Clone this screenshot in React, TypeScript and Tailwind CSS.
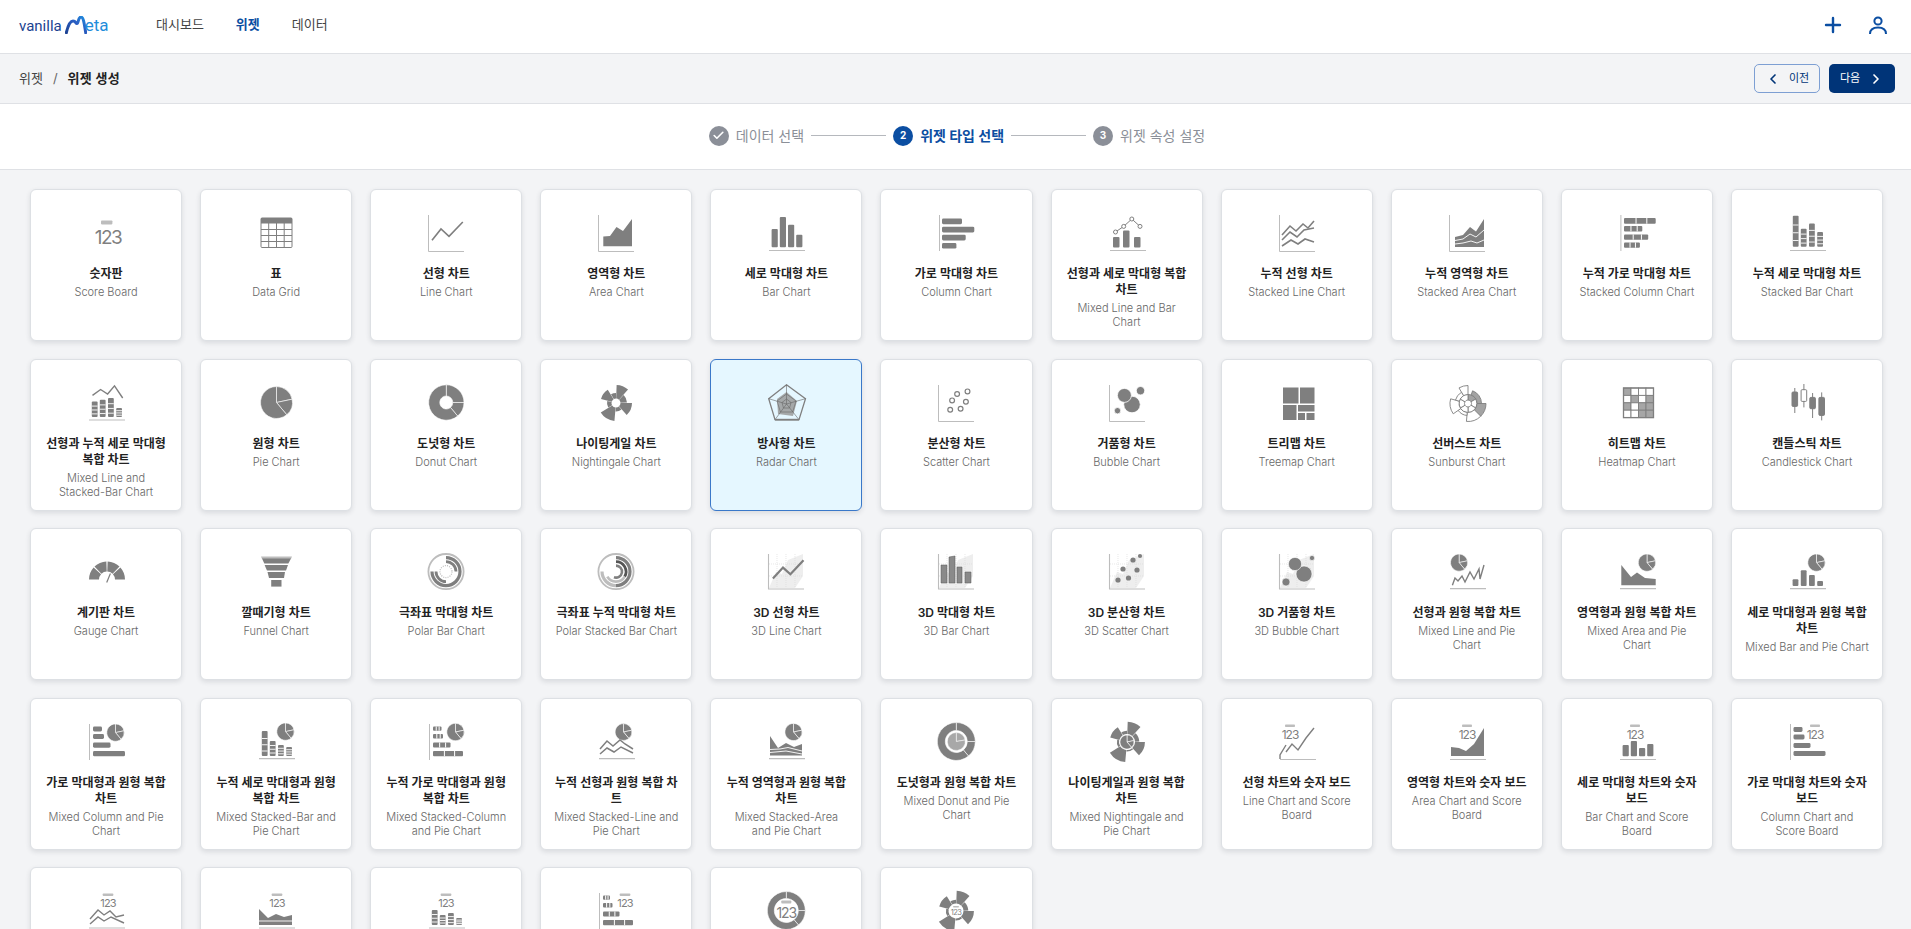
import { Check, ChevronLeft, ChevronRight, Plus } from 'lucide-react'
import type { ReactNode } from 'react'

const G = '#7f7f7f'
const L = '#bdbdbd'

const pt = (cx: number, cy: number, r: number, a: number) => {
  const t = (a * Math.PI) / 180
  return `${(cx + r * Math.sin(t)).toFixed(2)} ${(cy - r * Math.cos(t)).toFixed(2)}`
}

// a ring slice, angles clockwise from 12 o'clock
const sector = (cx: number, cy: number, r0: number, r1: number, a0: number, a1: number) => {
  const big = a1 - a0 > 180 ? 1 : 0
  return `M${pt(cx, cy, r1, a0)}A${r1} ${r1} 0 ${big} 1 ${pt(cx, cy, r1, a1)}L${pt(cx, cy, r0, a1)}A${r0} ${r0} 0 ${big} 0 ${pt(cx, cy, r0, a0)}Z`
}

const arc = (cx: number, cy: number, r: number, a0: number, a1: number) => {
  const big = a1 - a0 > 180 ? 1 : 0
  return `M${pt(cx, cy, r, a0)}A${r} ${r} 0 ${big} 1 ${pt(cx, cy, r, a1)}`
}

const Axis = () => <path d="M2.5 2V38.5H38" fill="none" stroke={L} strokeWidth="1" />
const Base = ({ y = 37.5 }: { y?: number }) => <path d={`M3 ${y}H39`} stroke={L} strokeWidth="1.2" />
const LeftAxis = () => <path d="M3.5 2V38" stroke={L} strokeWidth="1" />

const Pie = ({ cx = 20, cy = 19.5, r = 16 }: { cx?: number; cy?: number; r?: number }) => (
  <g fill={G} stroke="#fff" strokeWidth="0.6">
    <path d={sector(cx, cy, 0, r, 0, 78)} />
    <path d={sector(cx, cy, 0, r, 78, 140)} />
    <path d={sector(cx, cy, 0, r, 140, 360)} />
  </g>
)

const Score = ({ x = 15, y = 7.4, w = 11, fs = 19, dx = 0, fill = L }: { x?: number; y?: number; w?: number; fs?: number; dx?: number; fill?: string }) => (
  <g>
    <rect x={x - w / 2 - dx} y={y} width={w} height={fs * 0.21} rx="0.8" fill={fill} />
    <text x={x} y={y + fs * 1.24} textAnchor="middle" fontSize={fs} fontWeight="400" letterSpacing={-fs * 0.08} fill={G}>
      123
    </text>
  </g>
)

const Night = ({ cx = 20, cy = 20, k = 1, r0 = 4.5 }: { cx?: number; cy?: number; k?: number; r0?: number }) => {
  const petals = [
    [2, 42, 18],
    [44, 88, 11],
    [90, 138, 16],
    [140, 183, 8.5],
    [185, 238, 18],
    [240, 283, 9],
    [285, 328, 15.5],
    [330, 360, 10],
  ]
  return (
    <g fill={G}>
      {petals.map(([a, b, r]) => (
        <path key={a} d={sector(cx, cy, r0, r * k, a, b)} />
      ))}
    </g>
  )
}

const Donut = ({ r0 = 6.5, r1 = 17.7 }: { r0?: number; r1?: number }) => (
  <g fill={G} stroke="#fff" strokeWidth="0.6">
    <path d={sector(20.3, 19.5, r0, r1, 0, 90)} />
    <path d={sector(20.3, 19.5, r0, r1, 90, 140)} />
    <path d={sector(20.3, 19.5, r0, r1, 140, 360)} />
  </g>
)

const BarsPlain = ({ tops }: { tops: number[] }) => (
  <g fill={G}>
    {[5.6, 13.8, 22, 30.2].map((x, i) => (
      <rect key={x} x={x} y={tops[i]} width="6.2" height={34.2 - tops[i]} rx="1" />
    ))}
  </g>
)

const BarsStacked = ({ tops, bottom = 33.7, w = 5.8 }: { tops: number[]; bottom?: number; w?: number }) => (
  <g>
    {[5.8, 13.8, 22, 30.2].map((x, i) => (
      <g key={x}>
        <rect x={x} y={tops[i]} width={w} height={bottom - tops[i]} rx="1" fill={G} />
        {[0.3, 0.55, 0.8].map((f) => (
          <path key={f} d={`M${x} ${tops[i] + (bottom - tops[i]) * f}h${w}`} stroke="#fff" strokeWidth="0.9" />
        ))}
      </g>
    ))}
  </g>
)

const Rows = ({ rows }: { rows: [number, number, number, number][] }) => (
  <g fill={G}>
    {rows.map(([x, y, w, h]) => (
      <rect key={y} x={x} y={y} width={w} height={h} rx="1.4" />
    ))}
  </g>
)

const StackRows = ({ rows }: { rows: [number, number, number][] }) => (
  <g>
    {rows.map(([y, w, h]) => (
      <g key={y}>
        <rect x="7" y={y} width={w} height={h} rx="1" fill={G} />
        {[0.38, 0.72].map((f) => (
          <path key={f} d={`M${7 + w * f} ${y}v${h}`} stroke="#fff" strokeWidth="1" />
        ))}
      </g>
    ))}
  </g>
)

const Zigzags = ({ y = 0 }: { y?: number }) => (
  <g fill="none" stroke={G} strokeWidth="1.6" transform={`translate(0 ${y})`}>
    <path d="M5 20L13 11L19 16L26 9L31 13L37 6" />
    <path d="M5 25L13 17L20 22L27 15L37 13" />
    <path d="M5 31L14 25L21 29L28 24L37 27" />
  </g>
)

const Grid3D = () => (
  <g>
    <path d="M3 36L10 20L16 22L22 8L37 2V24L29 36Z" fill="#eeeeee" />
    <path d="M11 2V36M20 2V36M29 2V36M3 12H37M3 24H37" stroke="#d8d8d8" strokeWidth="0.6" strokeDasharray="1 1" />
    <path d="M2.5 2V37H38" fill="none" stroke={L} strokeWidth="1.1" />
  </g>
)

const icons: ReactNode[][] = [
  [
    <Score x={22} y={7.4} w={11.4} fs={19} dx={1.3} />,
    <g>
      <rect x="5" y="5" width="31" height="29.5" rx="1" fill="none" stroke={G} strokeWidth="1" />
      <rect x="5" y="5" width="31" height="5.5" fill={G} />
      <path d="M5 16.5H36M5 22.5H36M5 28.5H36M12.7 10V34M20.5 10V34M28.2 10V34" stroke={G} strokeWidth="1" />
    </g>,
    <g>
      <Axis />
      <path d="M6 27.3L15 16L23 23.4L36.8 9" fill="none" stroke={G} strokeWidth="1.6" />
    </g>,
    <g>
      <Axis />
      <path d="M7.3 33.3V23.4L14 23L20.5 14L27 18L36 6V33.3Z" fill={G} />
    </g>,
    <g>
      <BarsPlain tops={[16, 4, 11.7, 21.7]} />
      <Base />
    </g>,
    <g>
      <LeftAxis />
      <Rows rows={[[6, 5.4, 20, 5.8], [6, 13.7, 32.3, 5.8], [6, 21.7, 23.7, 5.8], [6, 30, 14.4, 5.6]]} />
    </g>,
    <g>
      <g fill={G}>
        <rect x="6" y="24" width="6.5" height="10.5" rx="1" />
        <rect x="16" y="17.5" width="6.5" height="17" rx="1" />
        <rect x="27" y="24" width="6.5" height="10.5" rx="1" />
      </g>
      <path d="M8.5 19L16.7 13.4L24.8 6L33 13.4" fill="none" stroke={G} strokeWidth="1" />
      <g fill="#fff" stroke={G} strokeWidth="1">
        <circle cx="8.5" cy="19" r="2" />
        <circle cx="16.7" cy="13.4" r="2" />
        <circle cx="24.8" cy="6" r="2" />
        <circle cx="33" cy="13.4" r="2" />
      </g>
      <Base />
    </g>,
    <g>
      <Axis />
      <Zigzags y={2} />
    </g>,
    <g>
      <Axis />
      <path d="M8 24L16 22L23 14L29 18.4L37 6V34H8Z" fill={G} />
      <path d="M8 27.5L16 26L23 21L29 24L37 17M8 31L16 30L24 28L30 30L37 27" fill="none" stroke="#fff" strokeWidth="0.9" />
    </g>,
    <g>
      <path d="M3.9 2V38" stroke={L} strokeWidth="1" />
      <StackRows rows={[[5, 31.7, 5.7], [13, 18.3, 5.4], [21.4, 24.2, 5.3], [29.4, 15.9, 5.3]]} />
    </g>,
    <g>
      <BarsStacked tops={[2.7, 15.7, 10.4, 19]} />
      <Base />
    </g>,
  ],
  [
    <g>
      <BarsStacked tops={[18.4, 16.7, 15, 25]} bottom={34} />
      <path d="M6.5 12.4L14.6 6.5L21.6 11L28.5 2.8L36.7 15" fill="none" stroke={G} strokeWidth="1.4" />
      <Base y={37} />
    </g>,
    <Pie cx={20.5} cy={19.5} r={16} />,
    <Donut />,
    <Night />,
    <g>
      <path d="M20.5 1.7L39.5 15.7L33 36.7H9L2.7 15.7Z" fill="none" stroke={G} strokeWidth="1.3" />
      <path d="M20.5 9L31 18L27 33L12 31L11 16Z" fill="#9a9a9a" fillOpacity="0.85" />
      <path d="M20.5 21V1.7M20.5 21L39.5 15.7M20.5 21L33 36.7M20.5 21L9 36.7M20.5 21L2.7 15.7" stroke="#666" strokeWidth="0.6" />
      <path d="M20.5 11L30 18L26.7 29H14.5L11 18Z" fill="none" stroke="#666" strokeWidth="0.6" />
      <path d="M20.5 16L25 19.5L23.5 25H17.5L16 19.5Z" fill="none" stroke="#666" strokeWidth="0.6" />
      <path d="M9 36.7H33" stroke={G} strokeWidth="1.8" />
    </g>,
    <g>
      <Axis />
      <g fill="none" stroke={G} strokeWidth="1.2">
        <circle cx="31.5" cy="8.4" r="2.4" />
        <circle cx="21.1" cy="11" r="2.4" />
        <circle cx="16.1" cy="17.4" r="2.4" />
        <circle cx="29.9" cy="18.7" r="2.4" />
        <circle cx="14.2" cy="26.7" r="2.4" />
        <circle cx="24.6" cy="25.7" r="2.4" />
      </g>
    </g>,
    <g>
      <Axis />
      <g fill={G} stroke="#fff" strokeWidth="0.8">
        <circle cx="25" cy="21.5" r="8.3" />
        <circle cx="17.4" cy="12.4" r="7" />
        <circle cx="33.5" cy="7.7" r="4.2" />
        <circle cx="10.5" cy="27.7" r="3.2" />
      </g>
    </g>,
    <g fill={G}>
      <rect x="6" y="4.5" width="15.5" height="16" />
      <rect x="23" y="4.5" width="14.5" height="16" />
      <rect x="6" y="22" width="13.5" height="15" />
      <rect x="21" y="22" width="16.5" height="6.5" />
      <rect x="21" y="30" width="7" height="7" />
      <rect x="29.5" y="30" width="8" height="7" />
    </g>,
    <g stroke={G} strokeWidth="0.9" fill="#fff">
      <path d={sector(21, 20.5, 3.5, 9, 0, 60)} fill="#a3a3a3" />
      <path d={sector(21, 20.5, 3.5, 9, 60, 120)} />
      <path d={sector(21, 20.5, 3.5, 9, 120, 180)} />
      <path d={sector(21, 20.5, 3.5, 9, 180, 240)} />
      <path d={sector(21, 20.5, 3.5, 9, 240, 300)} />
      <path d={sector(21, 20.5, 3.5, 9, 300, 360)} />
      <path d={sector(21, 20.5, 9, 18, 330, 360)} />
      <path d={sector(21, 20.5, 9, 13.5, 20, 90)} fill="#a3a3a3" />
      <path d={sector(21, 20.5, 9, 18, 90, 135)} fill="#a3a3a3" />
      <path d={sector(21, 20.5, 9, 18, 135, 185)} />
      <path d={sector(21, 20.5, 9, 12, 185, 235)} />
      <path d={sector(21, 20.5, 9, 18, 235, 285)} />
      <path d={sector(21, 20.5, 9, 13, 285, 330)} />
    </g>,
    <g>
      {[0, 1, 2, 3].map((r) =>
        [0, 1, 2, 3].map((c) => {
          const on = (r === 0 && c === 0) || (r === 1 && (c === 1 || c === 3)) || (r === 2 && (c === 0 || c === 2 || c === 3)) || (r === 3 && (c === 2 || c === 3))
          return <rect key={`${r}-${c}`} x={6.5 + c * 7.5} y={5 + r * 7.4} width="7.5" height="7.4" fill={on ? '#a6a6a6' : '#fff'} stroke={G} strokeWidth="0.9" />
        }),
      )}
      <rect x="6.5" y="5" width="30" height="29.6" fill="none" stroke={G} strokeWidth="1.3" />
    </g>,
    <g stroke={G} strokeWidth="1">
      <path d="M7.8 5V30M16.9 1V24.4M25.6 10V35M34.7 9.4V37.4" />
      <rect x="5" y="9" width="5.6" height="14.4" rx="1" fill={G} />
      <rect x="14.1" y="6.7" width="5.6" height="11.7" rx="1" fill="#fff" />
      <rect x="22.8" y="14.4" width="5.6" height="11.3" rx="1" fill={G} />
      <rect x="31.9" y="14.4" width="5.6" height="18" rx="1" fill={G} />
    </g>,
  ],
  [
    <g>
      <g fill={G}>
        <path d={sector(21, 27.5, 8, 18, 270, 312)} />
        <path d={sector(21, 27.5, 8, 18, 316, 358)} />
        <path d={sector(21, 27.5, 8, 18, 2, 44)} />
        <path d={sector(21, 27.5, 8, 18, 48, 90)} />
      </g>
      <path d="M24.4 21.6L20.7 30.6" stroke="#fff" strokeWidth="2.6" />
      <path d="M24.4 21.6L20.7 30.6" stroke={G} strokeWidth="1.2" />
    </g>,
    <g>
      <path d="M5 4.6H36L35 7H6Z" fill={L} />
      <path d="M6 6.5H35L32.4 11.5H8.3Z" fill={G} />
      <path d="M8.6 13H32L30 18.5H11Z" fill={G} />
      <path d="M11.5 20H29L28 26H13Z" fill={G} />
      <path d="M15.2 28H25.5V34.6H15.2Z" fill={G} />
    </g>,
    <g fill="none">
      <circle cx="20" cy="19.6" r="17.6" stroke={L} strokeWidth="1.8" />
      <path d={arc(20, 19.6, 14, 0, 270)} stroke={G} strokeWidth="3.2" />
      <path d={arc(20, 19.6, 10, 0, 90)} stroke={G} strokeWidth="2.8" />
      <path d={arc(20, 19.6, 10, 180, 270)} stroke={G} strokeWidth="2.8" />
      <circle cx="20" cy="19.6" r="6" stroke={L} strokeWidth="1.2" strokeDasharray="1 1.2" />
    </g>,
    <g fill="none">
      <circle cx="20" cy="19.6" r="17.6" stroke={L} strokeWidth="1.8" />
      <path d={arc(20, 19.6, 14, 0, 180)} stroke={G} strokeWidth="3.2" />
      <path d={arc(20, 19.6, 14, 180, 270)} stroke={L} strokeWidth="3.2" />
      <path d={arc(20, 19.6, 10, 0, 120)} stroke="#555" strokeWidth="2.8" />
      <path d={arc(20, 19.6, 10, 120, 240)} stroke={L} strokeWidth="2.8" />
      <path d={arc(20, 19.6, 6, 0, 200)} stroke={G} strokeWidth="2.6" />
    </g>,
    <g>
      <Grid3D />
      <path d="M6.9 26.6L17 15.6L24.4 22.3L37.5 8.3" fill="none" stroke={G} strokeWidth="2.2" />
    </g>,
    <g>
      <Grid3D />
      <g fill="#8a8a8a" stroke="#555" strokeWidth="0.5">
        <path d="M5 13H11V31H5Z" />
        <path d="M13 5L19 4V31H13Z" />
        <path d="M21 15H26V31H21Z" />
        <path d="M29 20H35V31H29Z" />
      </g>
    </g>,
    <g>
      <Grid3D />
      <g fill={G}>
        <circle cx="26" cy="8" r="2.6" />
        <circle cx="33" cy="4" r="2.1" />
        <circle cx="16" cy="17" r="2.6" />
        <circle cx="30" cy="18" r="2.6" />
        <circle cx="11" cy="28" r="2.6" />
        <circle cx="21.5" cy="26" r="2.6" />
      </g>
    </g>,
    <g>
      <Grid3D />
      <g fill={G} stroke="#fff" strokeWidth="0.6">
        <circle cx="27" cy="22" r="8" />
        <circle cx="18" cy="12" r="6.6" />
        <circle cx="35" cy="6" r="2.6" />
        <circle cx="9" cy="30" r="4" />
      </g>
    </g>,
    <g>
      <Pie cx={12.1} cy={10.6} r={8.6} />
      <path d="M5.4 33.3L8 26L11 29L15 24L18 30L23 20L27 27L32 17L33 27L37 13" fill="none" stroke={G} strokeWidth="1.4" />
      <Base y={36.6} />
    </g>,
    <g>
      <path d="M4.3 13L14 25L20 20.5L28 26L38.7 27V33.3H4.3Z" fill={G} />
      <Pie cx={30} cy={10.6} r={8.7} />
      <Base y={36.6} />
    </g>,
    <g>
      <g fill={G}>
        <rect x="5.6" y="27.3" width="5.8" height="6.8" rx="1" />
        <rect x="13.8" y="18.3" width="5.8" height="15.8" rx="1" />
        <rect x="22" y="23" width="5.8" height="11" rx="1" />
        <rect x="30.2" y="29" width="5.8" height="5" rx="1" />
      </g>
      <Pie cx={29.5} cy={10.6} r={8.7} />
      <Base y={36.6} />
    </g>,
  ],
  [
    <g>
      <LeftAxis />
      <Rows rows={[[7, 4.5, 9, 5], [7, 12, 11, 5], [7, 20.5, 17.5, 5.2], [7, 29, 32, 5.3]]} />
      <Pie cx={29.5} cy={10.6} r={8.7} />
    </g>,
    <g>
      <BarsStacked tops={[9, 19, 23, 25]} bottom={34} />
      <Pie cx={29.5} cy={9.6} r={8.7} />
      <Base y={36.6} />
    </g>,
    <g>
      <LeftAxis />
      <StackRows rows={[[4.5, 8.5, 4.2], [12, 10, 4.6], [20.5, 17.5, 5], [29, 30, 5.2]]} />
      <Pie cx={29.5} cy={10} r={8.7} />
    </g>,
    <g>
      <Pie cx={27.5} cy={10} r={8.4} />
      <path d="M4 27L11 19L17 24L24 18L29 22L37 27" fill="none" stroke={G} strokeWidth="1.5" />
      <path d="M4 32L11 26L18 30L25 25L37 31" fill="none" stroke={G} strokeWidth="1.5" />
      <Base y={36.6} />
    </g>,
    <g>
      <path d="M4 14L12 26L20 21L28 25L36 22V33.5H4Z" fill={G} />
      <path d="M4 27.5L14 27L22 25.5L36 29M4 30.5L20 29L36 32" fill="none" stroke="#fff" strokeWidth="0.9" />
      <Pie cx={27.5} cy={10} r={8.6} />
      <Base y={36.6} />
    </g>,
    <g>
      <Donut r0={11} r1={19} />
      <path d={sector(20.3, 19.5, 0, 9, 0, 80)} fill="#a8a8a8" stroke="#fff" strokeWidth="0.5" />
      <path d={sector(20.3, 19.5, 0, 9, 80, 360)} fill="#a8a8a8" stroke="#fff" strokeWidth="0.5" />
    </g>,
    <g>
      <Night k={1.12} r0={8} />
      <Pie cx={20} cy={20} r={7} />
    </g>,
    <g>
      <Score x={13} y={2.5} w={10} fs={12} />
      <path d="M3 37V33L9 23M9 30L15 22L21 28L29 16L37 6" fill="none" stroke={G} strokeWidth="1.4" />
      <Base y={37.5} />
    </g>,
    <g>
      <Score x={20} y={2.5} w={10} fs={12} />
      <path d="M4 25L12 26L19 29L27 22L37 6V34H4Z" fill={G} />
      <Base y={37.5} />
    </g>,
    <g>
      <Score x={18} y={2.5} w={10} fs={12} />
      <BarsPlain tops={[23, 19, 26, 22]} />
      <Base y={37.5} />
    </g>,
    <g>
      <LeftAxis />
      <Score x={28} y={2.5} w={10} fs={12} />
      <Rows rows={[[6.5, 5, 9, 5], [6.5, 12.5, 11, 5], [6.5, 21, 17, 5], [6.5, 29, 32, 5]]} />
    </g>,
  ],
  [
    <g>
      <Score x={22} y={2.6} w={10.8} fs={11} />
      <path d="M4 28L12 19L18 24L24 20L30 26L38 24" fill="none" stroke={G} strokeWidth="1.4" />
      <path d="M4 33L12 26L18 30L25 26L38 32" fill="none" stroke={G} strokeWidth="1.4" />
      <Base y={37} />
    </g>,
    <g>
      <Score x={21} y={2.6} w={10.8} fs={11} />
      <path d="M3 18L12 27L20 23L28 26L36 24V34H3Z" fill={G} />
      <path d="M3 30H36" stroke="#fff" strokeWidth="0.9" />
      <Base y={37} />
    </g>,
    <g>
      <Score x={20} y={2.6} w={10.8} fs={11} />
      <BarsStacked tops={[19, 24, 22, 27]} bottom={34} />
      <Base y={37} />
    </g>,
    <g>
      <LeftAxis />
      <Score x={29} y={2.6} w={10.8} fs={11} />
      <StackRows rows={[[4.5, 7, 4.2], [12, 9.5, 4.6], [20.5, 16.5, 5], [29, 30, 5.2]]} />
    </g>,
    <g>
      <Donut r0={12} r1={19} />
      <Score x={20.3} y={9.5} w={10} fs={14} />
    </g>,
    <g>
      <Night k={1.12} r0={7.5} />
      <Score x={20} y={15} w={6} fs={7.5} />
    </g>,
  ],
]

const charts: [string, string][] = [
  ['숫자판', 'Score Board'],
  ['표', 'Data Grid'],
  ['선형 차트', 'Line Chart'],
  ['영역형 차트', 'Area Chart'],
  ['세로 막대형 차트', 'Bar Chart'],
  ['가로 막대형 차트', 'Column Chart'],
  ['선형과 세로 막대형 복합 차트', 'Mixed Line and Bar Chart'],
  ['누적 선형 차트', 'Stacked Line Chart'],
  ['누적 영역형 차트', 'Stacked Area Chart'],
  ['누적 가로 막대형 차트', 'Stacked Column Chart'],
  ['누적 세로 막대형 차트', 'Stacked Bar Chart'],
  ['선형과 누적 세로 막대형 복합 차트', 'Mixed Line and Stacked-Bar Chart'],
  ['원형 차트', 'Pie Chart'],
  ['도넛형 차트', 'Donut Chart'],
  ['나이팅게일 차트', 'Nightingale Chart'],
  ['방사형 차트', 'Radar Chart'],
  ['분산형 차트', 'Scatter Chart'],
  ['거품형 차트', 'Bubble Chart'],
  ['트리맵 차트', 'Treemap Chart'],
  ['선버스트 차트', 'Sunburst Chart'],
  ['히트맵 차트', 'Heatmap Chart'],
  ['캔들스틱 차트', 'Candlestick Chart'],
  ['계기판 차트', 'Gauge Chart'],
  ['깔때기형 차트', 'Funnel Chart'],
  ['극좌표 막대형 차트', 'Polar Bar Chart'],
  ['극좌표 누적 막대형 차트', 'Polar Stacked Bar Chart'],
  ['3D 선형 차트', '3D Line Chart'],
  ['3D 막대형 차트', '3D Bar Chart'],
  ['3D 분산형 차트', '3D Scatter Chart'],
  ['3D 거품형 차트', '3D Bubble Chart'],
  ['선형과 원형 복합 차트', 'Mixed Line and Pie Chart'],
  ['영역형과 원형 복합 차트', 'Mixed Area and Pie Chart'],
  ['세로 막대형과 원형 복합 차트', 'Mixed Bar and Pie Chart'],
  ['가로 막대형과 원형 복합 차트', 'Mixed Column and Pie Chart'],
  ['누적 세로 막대형과 원형 복합 차트', 'Mixed Stacked-Bar and Pie Chart'],
  ['누적 가로 막대형과 원형 복합 차트', 'Mixed Stacked-Column and Pie Chart'],
  ['누적 선형과 원형 복합 차트', 'Mixed Stacked-Line and Pie Chart'],
  ['누적 영역형과 원형 복합 차트', 'Mixed Stacked-Area and Pie Chart'],
  ['도넛형과 원형 복합 차트', 'Mixed Donut and Pie Chart'],
  ['나이팅게일과 원형 복합 차트', 'Mixed Nightingale and Pie Chart'],
  ['선형 차트와 숫자 보드', 'Line Chart and Score Board'],
  ['영역형 차트와 숫자 보드', 'Area Chart and Score Board'],
  ['세로 막대형 차트와 숫자 보드', 'Bar Chart and Score Board'],
  ['가로 막대형 차트와 숫자 보드', 'Column Chart and Score Board'],
  ['누적 선형 차트와 숫자 보드', 'Stacked Line Chart and Score Board'],
  ['누적 영역형 차트와 숫자 보드', 'Stacked Area Chart and Score Board'],
  ['누적 세로 막대형 차트와 숫자 보드', 'Stacked Bar Chart and Score Board'],
  ['누적 가로 막대형 차트와 숫자 보드', 'Stacked Column Chart and Score Board'],
  ['도넛형 차트와 숫자 보드', 'Donut Chart and Score Board'],
  ['나이팅게일 차트와 숫자 보드', 'Nightingale Chart and Score Board'],
]

const allIcons = icons.flat()

function Logo() {
  return (
    <div className="flex items-end h-[18px] w-[95px] leading-none">
      <span className="text-[15px] text-[#1b4391] font-['Roboto',sans-serif] mr-[3px]">vanilla</span>
      <svg width="22" height="18" viewBox="0 0 22 18" className="shrink-0">
        <defs>
          <linearGradient id="lg" x1="0" y1="1" x2="1" y2="0">
            <stop offset="0" stopColor="#1b3f8f" />
            <stop offset="0.6" stopColor="#2a5fc4" />
            <stop offset="1" stopColor="#1e90e0" />
          </linearGradient>
        </defs>
        <path d="M1 18C3 9 5 5 8 5C11 5 10.5 7.5 12 7.5C13.5 7.5 13 1 16 1C19 1 19.5 11 21 18" fill="none" stroke="url(#lg)" strokeWidth="3" />
      </svg>
      <span className="text-[17px] text-[#1f8ddb] font-['Roboto',sans-serif] -ml-[2px]">eta</span>
    </div>
  )
}

function Stepper() {
  return (
    <div className="h-[66px] bg-white border-b border-[#dfe1e5] flex items-center justify-center pl-[3px] pb-[2px] text-[14px] text-[#8b8f98]">
      <div className="w-[20px] h-[20px] rounded-full bg-[#8b8f98] flex items-center justify-center text-white mr-[7px]">
        <Check size={13} strokeWidth={3} />
      </div>
      <span>데이터 선택</span>
      <div className="w-[75px] h-px bg-[#b5b8bd] mx-[7px]" />
      <div className="w-[20px] h-[20px] rounded-full bg-[#0b4ea2] flex items-center justify-center text-white text-[10px] font-bold mr-[7px]">2</div>
      <span className="font-bold text-[#0b4ea2]">위젯 타입 선택</span>
      <div className="w-[75px] h-px bg-[#b5b8bd] mx-[7px]" />
      <div className="w-[20px] h-[20px] rounded-full bg-[#8b8f98] flex items-center justify-center text-white text-[10px] font-bold mr-[7px]">3</div>
      <span>위젯 속성 설정</span>
    </div>
  )
}

export default function App() {
  return (
    <div className="h-screen overflow-hidden bg-[#f3f4f6] font-['Inter','Noto_Sans_CJK_KR',sans-serif]">
      <header className="h-[54px] bg-white border-b border-[#dfe1e5] flex items-center pl-[19px] pr-[23px] pb-[3px]">
        <Logo />
        <nav className="flex items-center ml-[42px] text-[13px] text-[#444] gap-[32px]">
          <span>대시보드</span>
          <span className="font-bold text-[#0b4ea2]">위젯</span>
          <span>데이터</span>
        </nav>
        <div className="ml-auto flex items-center gap-[23px] text-[#0b4ea2]">
          <Plus size={24} strokeWidth={2.4} />
          <svg width="20" height="20" viewBox="0 0 20 20" fill="none" stroke="currentColor" strokeWidth="2">
            <circle cx="10" cy="6" r="3.6" />
            <path d="M2 19C2 14.5 5.5 12.5 10 12.5S18 14.5 18 19" />
          </svg>
        </div>
      </header>

      <div className="h-[50px] border-b border-[#dfe1e5] flex items-center pl-[19px] pr-[16px] text-[13px]">
        <span className="text-[#444]">위젯</span>
        <span className="mx-[10px] text-[#666]">/</span>
        <span className="font-semibold text-[#222] tracking-[0.02em]">위젯 생성</span>
        <div className="ml-auto flex gap-[9px] text-[11px]">
          <button className="w-[66px] h-[29px] flex items-center justify-center gap-[8px] rounded-[5px] border border-[#7d9fd3] text-[#003478]">
            <ChevronLeft size={16} strokeWidth={2.5} />
            이전
          </button>
          <button className="w-[66px] h-[29px] flex items-center justify-center gap-[8px] rounded-[5px] bg-[#003478] text-white">
            다음
            <ChevronRight size={16} strokeWidth={2.5} />
          </button>
        </div>
      </div>

      <Stepper />

      <div className="grid grid-cols-11 gap-x-[18px] gap-y-[17.5px] pt-[19px] pl-[30px] pr-[28px]">
        {charts.map(([title, sub], i) => {
          const selected = sub === 'Radar Chart'
          return (
            <div
              key={sub}
              className={`h-[152px] rounded-[6px] border px-[12.5px] pt-[23px] text-center shadow-[0_2px_5px_rgba(30,40,60,0.12)] ${selected ? 'bg-[#e5f7ff] border-[#3a78c9]' : 'bg-white border-[#dde0e4]'}`}
            >
              <svg width="40" height="40" viewBox="0 0 40 40" className="mx-auto block overflow-visible">
                {allIcons[i]}
              </svg>
              <div className="mt-[13px] text-[12px] leading-4 font-semibold text-[#222]">{title}</div>
              <div className="mt-[3px] text-[11px] leading-[14px] font-light text-[#666]">{sub}</div>
            </div>
          )
        })}
      </div>
    </div>
  )
}
